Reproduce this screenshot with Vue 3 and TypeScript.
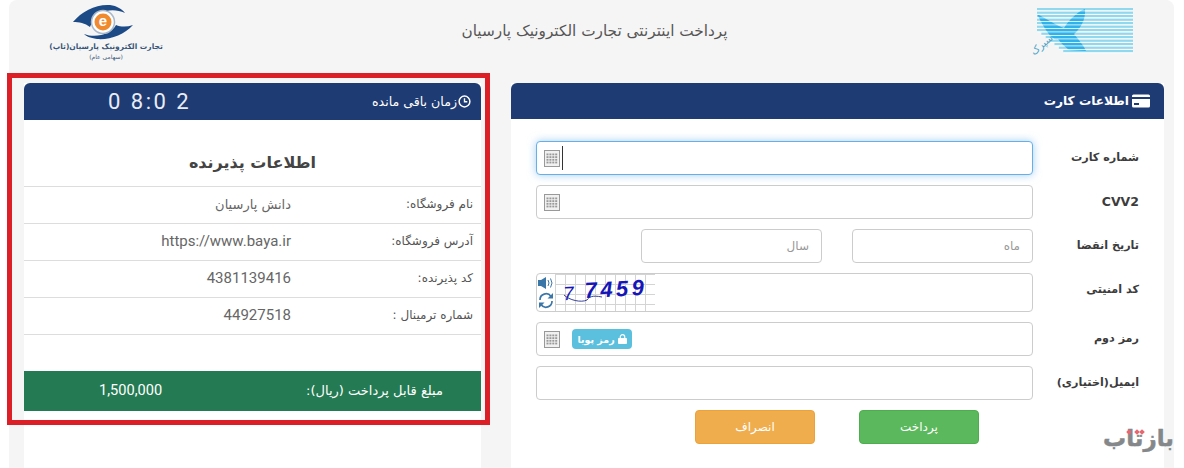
<script setup lang="ts">
interface Info { label: string; value: string; persian?: boolean }
interface Stripe { y: number; x: number }
const infos: Info[] = [
  { label: 'نام فروشگاه:', value: 'دانش پارسیان', persian: true },
  { label: 'آدرس فروشگاه:', value: 'https://www.baya.ir' },
  { label: 'کد پذیرنده:', value: '4381139416' },
  { label: 'شماره ترمینال :', value: '44927518' },
]
const stripes: Stripe[] = Array.from({ length: 13 }, (_, i) => {
  const y = 3 + i * 3.5
  return { y, x: y > 24 ? 10 + (y - 24) * 1.25 : 10 }
})
const keyCells: number[][] = []
for (let r = 0; r < 4; r++) for (let c = 0; c < 4; c++) keyCells.push([2.5 + c * 2.9, 3.5 + r * 2.7])
</script>

<template>
  <div class="page">
    <div class="panel">
      <header class="top">
        <div class="tap-logo">
          <svg width="62" height="38" viewBox="0 0 62 38">
            <path d="M1 19C10 8 24 1 38 2C45 3 50 6 53 10C40 4 24 7 18 24C13 20 7 19 1 19Z" fill="#1b4a86" />
            <path d="M61 22C52 32 38 37 25 36C18 35 14 33 12 31C25 36 40 30 44 22C49 24 55 24 61 22Z" fill="#1b4a86" />
            <circle cx="31" cy="19" r="11.500" fill="#fff" stroke="#aab9c9" stroke-width="1.500" />
            <circle cx="31" cy="19" r="8.500" fill="#ef8a2e" />
            <text x="31" y="23" class="e-mark">e</text>
          </svg>
          <div class="tap-name">تجارت الکترونیک پارسیان(تاپ)</div>
          <div class="tap-sub">(سهامی عام)</div>
        </div>
        <div class="top-title">پرداخت اینترنتی تجارت الکترونیک پارسیان</div>
        <div class="bank-logo">
          <svg width="108" height="52" viewBox="0 0 108 52">
            <rect v-for="s in stripes" :key="s.y" :x="s.x" :y="s.y - 1" :width="106 - s.x" height="2.300" fill="#8fd8ee" />
            <path d="M10 8C22 14 30 20 37 22C42 14 50 6 58 3C59 14 53 23 47 28C52 34 57 40 59 45L42 44C37 40 33 36 31 33C26 35 20 28 10 8Z" fill="#2fb2ea" />
            <rect v-for="s in stripes" :key="'g' + s.y" :x="s.x" :y="s.y + 1.500" :width="106 - s.x" height=".8" fill="#fff" />
            <text x="2" y="44" class="bank-name" transform="rotate(-40 12 40)">سپرک</text>
          </svg>
        </div>
      </header>

      <main class="columns">
        <section class="merchant">
          <div class="bar timer-bar">
            <span class="timer">0 8:0 2</span>
            <span class="bar-label">
              زمان باقی مانده
              <svg width="13" height="13" viewBox="0 0 14 14">
                <circle cx="7" cy="7" r="5.800" fill="none" stroke="#fff" stroke-width="1.600" />
                <path d="M7 3.400V7.300H10" fill="none" stroke="#fff" stroke-width="1.500" />
              </svg>
            </span>
          </div>
          <h2>اطلاعات پذیرنده</h2>
          <div class="info-list">
            <div v-for="item in infos" :key="item.label" class="info-row">
              <span class="info-label">{{ item.label }}</span>
              <span class="info-value" :class="{ fa: item.persian }">{{ item.value }}</span>
            </div>
          </div>
          <div class="amount">
            <span class="amount-value">1,500,000</span>
            <span class="amount-label">مبلغ قابل پرداخت (ریال):</span>
          </div>
          <div class="highlight"></div>
        </section>

        <section class="card">
          <div class="bar card-bar">
            <span>اطلاعات کارت</span>
            <svg width="18" height="14" viewBox="0 0 18 14">
              <rect width="18" height="13" rx="1.500" y="0.500" fill="#fff" />
              <rect y="3" width="18" height="2" fill="#1f3b73" />
              <rect x="2" y="9" width="5" height="2" fill="#1f3b73" />
            </svg>
          </div>
          <form class="form" @submit.prevent>
            <div class="row">
              <label>شماره کارت</label>
              <div class="field focus">
                <svg class="keypad" width="16" height="17" viewBox="0 0 16 17">
                  <rect x=".5" y=".5" width="15" height="16" fill="#f1f1f1" stroke="#999" />
                  <rect v-for="c in keyCells" :key="c.join()" :x="c[0]" :y="c[1]" width="2" height="1.800" fill="#999" />
                </svg>
                <span class="caret"></span>
              </div>
            </div>
            <div class="row">
              <label class="latin">CVV2</label>
              <div class="field">
                <svg class="keypad" width="16" height="17" viewBox="0 0 16 17">
                  <rect x=".5" y=".5" width="15" height="16" fill="#f1f1f1" stroke="#999" />
                  <rect v-for="c in keyCells" :key="c.join()" :x="c[0]" :y="c[1]" width="2" height="1.800" fill="#999" />
                </svg>
              </div>
            </div>
            <div class="row">
              <label>تاریخ انقضا</label>
              <div class="date">
                <div class="field month">ماه</div>
                <div class="field year">سال</div>
              </div>
            </div>
            <div class="row r-captcha">
              <label>کد امنیتی</label>
              <div class="field captcha">
                <div class="cap-tools">
                  <svg width="17" height="14" viewBox="0 0 17 14">
                    <path d="M0 4H3L8 1V13L3 10H0Z" fill="#3a77a8" />
                    <path d="M10 4Q12 7 10 10M12.500 2.500Q15.500 7 12.500 11.500" fill="none" stroke="#3a77a8" stroke-width="1" />
                  </svg>
                  <svg width="16" height="17" viewBox="0 0 16 17">
                    <path d="M2 8A6 6 0 0 1 13 4.500M14 9A6 6 0 0 1 3 12.500" fill="none" stroke="#3a77a8" stroke-width="1.700" />
                    <path d="M15 1V6.500H9.500ZM1 16V10.500H6.500Z" fill="#3a77a8" />
                  </svg>
                </div>
                <div class="cap-img">
                  <div class="cap-text"><span class="thin">7</span><span class="thick">7459</span></div>
                  <svg class="cap-line" width="70" height="22" viewBox="0 0 70 22">
                    <path d="M9 7C14 12 26 15 32 12C34 9 37 7 47 9" fill="none" stroke="#26308f" stroke-width=".9" />
                  </svg>
                </div>
              </div>
            </div>
            <div class="row">
              <label>رمز دوم</label>
              <div class="field">
                <svg class="keypad" width="16" height="17" viewBox="0 0 16 17">
                  <rect x=".5" y=".5" width="15" height="16" fill="#f1f1f1" stroke="#999" />
                  <rect v-for="c in keyCells" :key="c.join()" :x="c[0]" :y="c[1]" width="2" height="1.800" fill="#999" />
                </svg>
                <button type="button" class="otp">
                  <span>رمز پویا</span>
                  <svg width="9" height="10" viewBox="0 0 10 11">
                    <rect y="4.500" width="10" height="6.500" rx="1" fill="#fff" />
                    <path d="M2.500 5V3.200A2.500 2.500 0 0 1 7.500 3.200V5" fill="none" stroke="#fff" stroke-width="1.300" />
                  </svg>
                </button>
              </div>
            </div>
            <div class="row">
              <label>ایمیل(اختیاری)</label>
              <div class="field"></div>
            </div>
            <div class="buttons">
              <button type="button" class="btn pay">پرداخت</button>
              <button type="button" class="btn cancel">انصراف</button>
            </div>
          </form>
        </section>
      </main>
    </div>
    <div class="watermark">
      <span>بازتاب</span>
      <i class="dot d1"></i><i class="dot d2"></i><i class="dot d3"></i>
    </div>
  </div>
</template>

<style scoped>
.page {
  position: relative;
  width: 1184px;
  height: 468px;
  overflow: hidden;
  background: #fff;
  font-family: "DejaVu Sans", "Noto Sans", sans-serif;
  color: #555;
}
.panel {
  width: 1165px;
  height: 468px;
  margin-left: 9px;
  background: #f5f5f5;
  border-radius: 8px 8px 0 0;
}
.top {
  height: 73px;
  display: grid;
  grid-template-columns: 194px 1fr 190px;
}
.tap-logo {
  display: flex;
  flex-direction: column;
  align-items: center;
  padding-top: 3px;
  white-space: nowrap;
}
.tap-logo svg {
  margin-left: -6px;
}
.e-mark {
  font: bold 15px "Liberation Sans", sans-serif;
  fill: #fff;
  text-anchor: middle;
}
.tap-name {
  direction: rtl;
  margin-top: 1px;
  font-size: 7.500px;
  font-weight: 700;
  color: #39577a;
}
.tap-sub {
  direction: rtl;
  margin-top: 2px;
  font-size: 6px;
  color: #39577a;
}
.top-title {
  direction: rtl;
  text-align: center;
  font-size: 15.300px;
  line-height: 20px;
  padding: 21px 0 0 2px;
  color: #555;
}
.bank-logo {
  display: flex;
  justify-content: flex-end;
  align-items: flex-start;
  padding: 6px 39px 0 0;
}
.bank-name {
  font-size: 10px;
  fill: #4aa3c7;
}
.columns {
  display: flex;
  gap: 30px;
  padding: 10px 10px 0 15px;
}
.merchant {
  position: relative;
  width: 457px;
  height: 385px;
  background: #fff;
}
.card {
  width: 653px;
  height: 385px;
  background: #fff;
}
.bar {
  background: #1f3b73;
  color: #fff;
  display: flex;
  align-items: center;
  border-radius: 6px 6px 0 0;
}
.timer-bar {
  height: 37px;
  justify-content: space-between;
  padding: 0 10px 0 84px;
}
.timer {
  font: 22px/1 Roboto, sans-serif;
  letter-spacing: 2.500px;
  color: #e9edf5;
}
.bar-label {
  display: flex;
  align-items: center;
  gap: 1px;
  direction: ltr;
  font-size: 12.600px;
}
h2 {
  margin: 0;
  height: 66px;
  padding-top: 29px;
  box-sizing: border-box;
  direction: rtl;
  text-align: center;
  font-size: 16px;
  line-height: 28px;
  font-weight: 700;
  color: #444;
}
.info-list {
  border-top: 1px solid #ddd;
}
.info-row {
  height: 37px;
  box-sizing: border-box;
  border-bottom: 1px solid #ddd;
  display: flex;
  align-items: center;
  padding: 0 8px 2px 0;
  font-size: 12px;
  direction: rtl;
}
.info-label {
  width: 182px;
  color: #555;
}
.info-value {
  font: 15px Roboto, "DejaVu Sans", sans-serif;
  color: #666;
  direction: ltr;
  text-align: right;
}
.info-value.fa {
  direction: rtl;
  font: 13px "DejaVu Sans", sans-serif;
}
.amount {
  margin-top: 36px;
  height: 40px;
  padding: 0 38px 2px 75px;
  box-sizing: border-box;
  background: #247a52;
  color: #fff;
  display: flex;
  align-items: center;
  justify-content: space-between;
}
.amount-label {
  direction: rtl;
  font-size: 13px;
}
.amount-value {
  font: 14.600px Roboto, sans-serif;
}
.highlight {
  position: absolute;
  left: -17px;
  top: -10px;
  width: 483px;
  height: 352px;
  box-sizing: border-box;
  border: 5px solid #dc1f26;
  pointer-events: none;
}
.card-bar {
  height: 36px;
  justify-content: flex-end;
  gap: 3px;
  padding-right: 14px;
  font-size: 12.200px;
  font-weight: 700;
  direction: ltr;
}
.form {
  padding: 22px 25px 0;
  display: flex;
  flex-direction: column;
  gap: 10px;
}
.row {
  display: flex;
  flex-direction: row-reverse;
  justify-content: space-between;
  height: 34px;
  align-items: center;
}
.r-captcha {
  height: 39px;
}
label {
  direction: rtl;
  width: 94px;
  padding-bottom: 2px;
  text-align: right;
  font-size: 11.200px;
  font-weight: 700;
  color: #3c3c3c;
  white-space: nowrap;
}
.r-captcha label {
  padding-bottom: 6px;
}
label.latin {
  font-size: 12.500px;
}
.field {
  position: relative;
  box-sizing: border-box;
  width: 497px;
  height: 34px;
  border: 1px solid #ccc;
  border-radius: 4px;
  background: #fff;
  display: flex;
  align-items: center;
  padding-left: 7px;
  direction: ltr;
}
.field.focus {
  border-color: #66afe9;
  box-shadow: 0 0 8px rgba(102, 175, 233, .6);
}
.caret {
  width: 1px;
  height: 24px;
  margin-left: 2px;
  background: #333;
}
.date {
  width: 497px;
  display: flex;
  flex-direction: row-reverse;
  gap: 30px;
}
.month, .year {
  width: 181px;
  direction: rtl;
  padding: 0 12px;
  font-size: 12px;
  color: #999;
}
.year {
  margin-left: 105px;
}
.captcha {
  height: 39px;
  padding-left: 0;
  overflow: hidden;
}
.cap-tools {
  width: 18px;
  display: flex;
  flex-direction: column;
  align-items: center;
  gap: 2px;
}
.cap-img {
  position: relative;
  width: 100px;
  height: 37px;
  background-color: #fff;
  background-image:
    linear-gradient(#d4d4d4 1px, transparent 1px),
    linear-gradient(90deg, #d4d4d4 1px, transparent 1px);
  background-size: 10px 10px;
}
.cap-text {
  position: absolute;
  left: 8px;
  top: 3px;
  display: flex;
  gap: 11px;
  font: italic 22px/26px "Liberation Sans", sans-serif;
  color: #1616b8;
  white-space: nowrap;
  transform: rotate(-3deg);
}
.thin {
  font-size: 19px;
  margin-top: 2px;
}
.thick {
  font-weight: 700;
  letter-spacing: 3.500px;
}
.cap-line {
  position: absolute;
  left: 0;
  top: 14px;
}
.otp {
  margin-left: 12px;
  height: 20px;
  width: 60px;
  padding: 0 4px;
  border: 0;
  border-radius: 4px;
  background: #5bc0de;
  color: #fff;
  font-family: "DejaVu Sans", sans-serif;
  font-size: 9.500px;
  font-weight: 700;
  direction: ltr;
  white-space: nowrap;
  display: flex;
  align-items: center;
  justify-content: center;
  gap: 3px;
}
.buttons {
  display: flex;
  flex-direction: row-reverse;
  gap: 44px;
  padding-right: 160px;
}
.btn {
  width: 120px;
  height: 34px;
  border-radius: 4px;
  border: 1px solid;
  color: #fff;
  font-family: "DejaVu Sans", sans-serif;
  font-size: 12px;
}
.pay {
  background: #5cb85c;
  border-color: #4cae4c;
}
.cancel {
  background: #f0ad4e;
  border-color: #eea236;
}
.watermark {
  position: absolute;
  right: 10px;
  top: 425px;
  width: 70px;
  height: 36px;
  direction: rtl;
  font-size: 23px;
  font-weight: 700;
  white-space: nowrap;
  color: #85888a;
  -webkit-text-stroke: .5px #85888a;
}
.dot {
  position: absolute;
  width: 4px;
  height: 4px;
  background: #e8666f;
  transform: rotate(45deg);
}
.d1 { left: 31px; top: 5px; }
.d2 { left: 36px; top: 5px; }
.d3 { left: 23px; top: 5px; }
</style>
